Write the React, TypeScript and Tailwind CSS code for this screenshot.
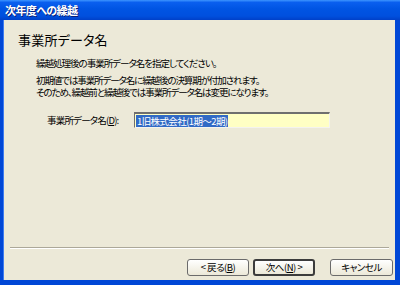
import React from "react";

const font = {
  fontFamily: '"Noto Sans CJK JP", "Noto Sans", sans-serif',
  fontFeatureSettings: '"palt"',
};

function Btn({ children, focused }: { children: React.ReactNode; focused?: boolean }) {
  return (
    <div
      className={`h-[17px] flex items-center justify-center rounded-[3px] text-[9.5px] tracking-[-0.5px] leading-none text-black bg-gradient-to-b from-[#ffffff] to-[#ece9d8] whitespace-nowrap ${
        focused ? "border-2 border-[#3c3c3c]" : "border border-[#6b6b6b]"
      }`}
    >
      {children}
    </div>
  );
}

export default function App() {
  return (
    <div className="w-[400px] h-[285px] flex flex-col overflow-hidden" style={font}>
      <div className="h-[20px] shrink-0 flex items-center pl-[5px] bg-[linear-gradient(to_bottom,#3d95ff_0%,#0a5fef_12%,#0054e3_45%,#0050de_80%,#0040c8_100%)]">
        <span className="text-white text-[11px] font-bold leading-none tracking-[-0.6px] [text-shadow:1px_1px_0_#0a1e7a]">
          次年度への繰越
        </span>
      </div>
      <div className="flex-1 flex bg-[#0047d6] pl-[3px] pr-[5px] pb-[5px]">
        <div className="flex-1 flex flex-col bg-[#ece9d8] border-l border-[#3d7bf0]">
          <div className="pl-[14px] pt-[10px] text-[13px] leading-[20px] text-black tracking-[0.2px]">
            事業所データ名
          </div>
          <div className="pl-[32px] pt-[8px] text-[9.5px] tracking-[-1px] leading-[11px] text-black whitespace-nowrap">
            繰越処理後の事業所データ名を指定してください。
          </div>
          <div className="pl-[32px] pt-[5px] text-[9.5px] tracking-[-1.1px] leading-[12px] text-black whitespace-nowrap">
            <div>初期値では事業所データ名に繰越後の決算期が付加されます。</div>
            <div>そのため、繰越前と繰越後では事業所データ名は変更になります。</div>
          </div>
          <div className="flex items-center pt-[14px] pl-[43px]">
            <span className="text-[9.5px] tracking-[-0.8px] text-black w-[87px] whitespace-nowrap">
              事業所データ名(<span className="underline">D</span>):
            </span>
            <div className="w-[196px] h-[16px] bg-[#ffffc4] border-t-2 border-l border-[#6f6f6f] border-r border-b border-r-[#f4f3ee] border-b-[#f4f3ee] flex items-center pl-[1px]">
              <span className="bg-[#316ac5] text-white text-[9.5px] tracking-[-0.6px] leading-[12px] px-[1px] whitespace-nowrap">
                1旧株式会社(1期～2期)
              </span>
            </div>
          </div>
          <div className="flex-1" />
          <div className="mx-[6px] border-t border-b border-t-[#aca899] border-b-white" />
          <div className="flex justify-end pr-[2px] pt-[10px] pb-[4px]">
            <div className="w-[62px]">
              <Btn>
                &lt; 戻る(<span className="underline">B</span>)
              </Btn>
            </div>
            <div className="w-[62px] ml-[4px]">
              <Btn focused>
                次へ(<span className="underline">N</span>) &gt;
              </Btn>
            </div>
            <div className="w-[63px] ml-[15px]">
              <Btn>キャンセル</Btn>
            </div>
          </div>
        </div>
      </div>
    </div>
  );
}
